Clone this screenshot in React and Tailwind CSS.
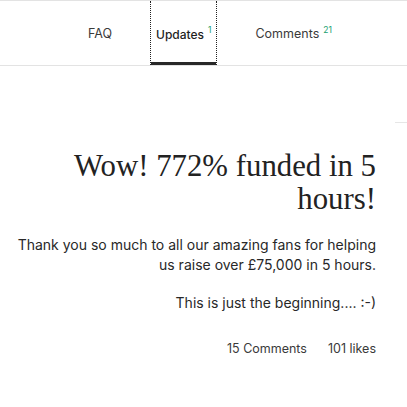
export default function App() {
  return (
    <div className="w-[407px] h-[407px] bg-white overflow-hidden relative" style={{ fontFamily: "Inter, 'Liberation Sans', sans-serif" }}>
      <div className="border-t border-b border-[#e3e3e3] h-[66px] flex items-stretch pl-[82px] text-[12.5px] text-[#3a3a3a]">
        <div className="px-[6px] pt-[3px] flex items-center">FAQ</div>
        <div className="ml-[32px] px-[5px] pt-[3px] flex items-center relative border-l border-r border-dotted border-[#222] font-medium text-[12px] text-[#1e1e1e]">
          <span>Updates</span>
          <sup className="text-[#1aa070] font-normal text-[8.5px] ml-[4px] -top-[5px]">1</sup>
          <div className="absolute left-0 right-0 bottom-0 h-[3px] bg-[#282828]"></div>
        </div>
        <div className="ml-[32px] px-[6px] pt-[3px] flex items-center">
          <span>Comments</span>
          <sup className="text-[#1aa070] text-[8.5px] ml-[4px] -top-[5px]">21</sup>
        </div>
      </div>
      <div className="absolute right-0 top-[122px] w-[12px] h-px bg-[#e6e6e6]"></div>
      <div className="pt-[84px] pr-[31px] pl-[4px] text-right">
        <h1 className="text-[30.8px] leading-[33px] text-[#222]" style={{ fontFamily: "'Liberation Serif', serif" }}>
          Wow! 772% funded in 5 hours!
        </h1>
        <p className="mt-[19px] text-[14px] leading-[20px] text-[#282828]">
          Thank you so much to all our amazing fans for helping us raise over £75,000 in 5 hours.
        </p>
        <p className="mt-[18px] text-[14px] leading-[20px] text-[#282828]">This is just the beginning.... :-)</p>
        <div className="mt-[27px] text-[12.5px] text-[#3a3a3a] flex justify-end gap-[21px]">
          <span>15 Comments</span>
          <span>101 likes</span>
        </div>
      </div>
    </div>
  );
}
